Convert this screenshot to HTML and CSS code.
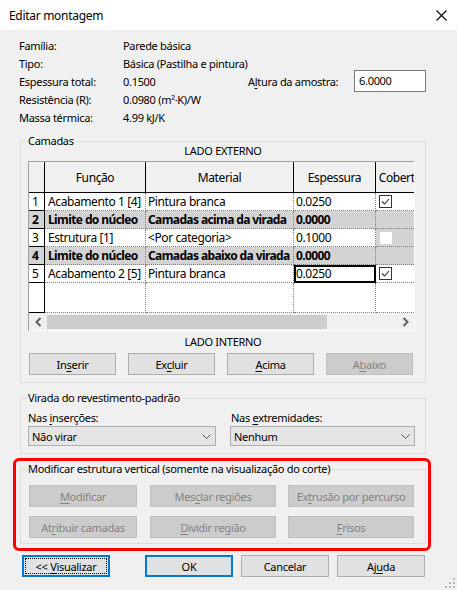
FILE: index.html
```html
<!DOCTYPE html>
<html lang="pt-BR">
<head>
<meta charset="utf-8">
<title>Editar montagem</title>
<link rel="stylesheet" href="styles.css">
</head>
<body>
<div class="titlebar">
    <span class="title">Editar montagem</span>
    <svg class="close" width="11" height="11" viewBox="0 0 11 11"><path d="M0.5 0.5 L10.5 10.5 M10.5 0.5 L0.5 10.5" stroke="#000" stroke-width="1.1" fill="none"/></svg>
</div>

<div class="content">
    <!-- dados da parede -->
    <div class="info">
        <span>Família:</span><span class="wide">Parede básica</span>
        <span>Tipo:</span><span class="wide">Básica (Pastilha e pintura)</span>
        <span>Espessura total:</span><span>0.1500</span><span>A<u>l</u>tura da amostra:</span><span class="textbox">6.0000</span>
        <span>Resistência (R):</span><span class="wide">0.0980 (m²·K)/W</span>
        <span>Massa térmica:</span><span class="wide">4.99 kJ/K</span>
    </div>

    <fieldset class="group layers">
        <legend>Camadas</legend>
        <div class="side top">LADO EXTERNO</div>
        <div class="grid-frame">
            <div class="grid-clip">
                <table class="layers-table">
                    <colgroup><col class="c-num"><col class="c-func"><col class="c-mat"><col class="c-esp"><col class="c-cob"></colgroup>
                    <thead>
                        <tr><th class="num"></th><th>Função</th><th>Material</th><th>Espessura</th><th>Cobertura</th></tr>
                    </thead>
                    <tbody>
                        <tr><td class="num">1</td><td class="func">Acabamento 1 [4]</td><td>Pintura branca</td><td>0.0250</td><td class="chk"><span class="checkbox on"></span></td></tr>
                        <tr class="core"><td class="num">2</td><td class="func">Limite do núcleo</td><td>Camadas acima da virada</td><td>0.0000</td><td></td></tr>
                        <tr><td class="num">3</td><td class="func">Estrutura [1]</td><td>&lt;Por categoria&gt;</td><td>0.1000</td><td class="chk off"><span class="checkbox blank"></span></td></tr>
                        <tr class="core"><td class="num">4</td><td class="func">Limite do núcleo</td><td>Camadas abaixo da virada</td><td>0.0000</td><td></td></tr>
                        <tr><td class="num">5</td><td class="func">Acabamento 2 [5]</td><td>Pintura branca</td><td class="editing">0.0250</td><td class="chk"><span class="checkbox on"></span></td></tr>
                        <tr class="empty"><td class="num"></td><td></td><td></td><td></td><td></td></tr>
                    </tbody>
                </table>
            </div>
            <div class="hscroll">
                <span class="arrow"><svg width="7" height="10" viewBox="0 0 7 10"><polyline points="5.5,1 1.5,5 5.5,9" fill="none" stroke="#606060" stroke-width="2"/></svg></span>
                <span class="thumb"></span>
                <span class="track"></span>
                <span class="arrow"><svg width="7" height="10" viewBox="0 0 7 10"><polyline points="1.5,1 5.5,5 1.5,9" fill="none" stroke="#606060" stroke-width="2"/></svg></span>
            </div>
        </div>
        <div class="side bottom">LADO INTERNO</div>
        <div class="layer-buttons">
            <button class="btn">In<u>s</u>erir</button>
            <button class="btn">Ex<u>c</u>luir</button>
            <button class="btn"><u>A</u>cima</button>
            <button class="btn" disabled>A<u>b</u>aixo</button>
        </div>
    </fieldset>

    <fieldset class="group wrap">
        <legend>Virada do revestimento-padrão</legend>
        <div class="wrap-grid">
            <label>Nas <u>i</u>nserções:</label>
            <label class="second">Nas <u>e</u>xtremidades:</label>
            <div class="select"><span>Não virar</span><svg width="9" height="5" viewBox="0 0 9 5"><polyline points="0.5,0.5 4.5,4.5 8.5,0.5" fill="none" stroke="#555" stroke-width="1"/></svg></div>
            <div class="select"><span>Nenhum</span><svg width="9" height="5" viewBox="0 0 9 5"><polyline points="0.5,0.5 4.5,4.5 8.5,0.5" fill="none" stroke="#555" stroke-width="1"/></svg></div>
        </div>
    </fieldset>

    <div class="highlight">
        <fieldset class="group modify">
            <legend>Modificar estrutura vertical (somente na visualização do corte)</legend>
            <div class="modify-grid">
                <button class="btn" disabled><u>M</u>odificar</button>
                <button class="btn" disabled>Mes<u>c</u>lar regiões</button>
                <button class="btn" disabled>Ex<u>t</u>rusão por percurso</button>
                <button class="btn" disabled>At<u>r</u>ibuir camadas</button>
                <button class="btn" disabled><u>D</u>ividir região</button>
                <button class="btn" disabled><u>F</u>risos</button>
            </div>
        </fieldset>
    </div>

    <div class="footer">
        <button class="btn default focus">&lt;&lt; <u>V</u>isualizar</button>
        <button class="btn default ok">OK</button>
        <button class="btn">Cancelar</button>
        <button class="btn">Aj<u>u</u>da</button>
    </div>
</div>

<svg class="grip" width="10" height="10" viewBox="0 0 10 10">
    <rect x="8" y="0" width="2" height="2" fill="#b8b8b8"/>
    <rect x="4" y="4" width="2" height="2" fill="#b8b8b8"/>
    <rect x="8" y="4" width="2" height="2" fill="#b8b8b8"/>
    <rect x="0" y="8" width="2" height="2" fill="#b8b8b8"/>
    <rect x="4" y="8" width="2" height="2" fill="#b8b8b8"/>
    <rect x="8" y="8" width="2" height="2" fill="#b8b8b8"/>
</svg>
</body>
</html>
```

FILE: styles.css
```css
html, body {
    margin: 0;
}

body {
    position: relative;
    width: 457px;
    height: 590px;
    overflow: hidden;
    background: #f0f0f0;
    font-family: "Noto Sans", "Segoe UI", sans-serif;
    font-size: 11px;
    letter-spacing: -0.3px;
    color: #000;
}

u {
    text-decoration-thickness: 1px;
    text-underline-offset: 2px;
}

/* barra de título */
.titlebar {
    height: 30px;
    background: #fff;
    display: flex;
    align-items: center;
    justify-content: space-between;
    padding: 0 10px 0 9px;
    box-sizing: border-box;
}
.title {
    font-size: 12px;
}

.content {
    padding: 6px 31px 0 20px;
}

/* dados da parede */
.info {
    display: grid;
    grid-template-columns: 104px 125px 106px 72px;
    grid-auto-rows: 18px;
    align-items: center;
    margin-left: -1px;
}
.info .wide {
    grid-column: 2 / 5;
}
.textbox {
    height: 22px;
    box-sizing: border-box;
    border: 1px solid #7a7a7a;
    background: #fff;
    padding-left: 4px;
    line-height: 20px;
}

/* caixas de grupo */
.group {
    margin: 9px 0 0;
    border: 1px solid #dcdcdc;
    padding: 0 7px 7px;
    min-width: 0;
}
.group legend {
    padding: 0 2px 0 0;
    line-height: 12px;
}

.side {
    text-align: center;
    line-height: 12px;
}
.side.top {
    margin: -2px 0 4px;
}
.side.bottom {
    margin: 5px 0 5px;
}

/* tabela de camadas */
.grid-frame {
    width: 387px;
    box-sizing: border-box;
    border: 1px solid #a0a0a0;
    border-right-color: #fff;
    border-bottom-color: #fff;
}
.grid-clip {
    height: 151px;
    overflow: hidden;
    background: #fff;
}
.layers-table {
    table-layout: fixed;
    border-collapse: separate;
    border-spacing: 0;
    width: 407px;
    font-size: 12px;
    letter-spacing: -0.4px;
}
.c-num { width: 16px; }
.c-func { width: 101px; }
.c-mat { width: 148px; }
.c-esp { width: 82px; }
.c-cob { width: 60px; }

.layers-table thead tr {
    height: 31px;
}
.layers-table th {
    background: #f0f0f0;
    font-weight: normal;
    border-right: 1px solid #000;
    border-bottom: 1px solid #000;
    padding: 0;
    white-space: nowrap;
    overflow: hidden;
}
.layers-table tbody tr {
    height: 18px;
}
.layers-table tbody tr.empty {
    height: 30px;
}
.layers-table td {
    border-right: 1px dotted #808080;
    border-bottom: 1px dotted #808080;
    padding: 0 0 0 2px;
    white-space: nowrap;
    overflow: hidden;
    line-height: 16px;
}
.layers-table td.num {
    border-right: 1px solid #000;
    border-bottom: 1px solid #000;
    padding-left: 3px;
}
.layers-table td.func {
    padding-left: 3px;
}
.layers-table tr.core td {
    background: #d3d3d3;
    font-weight: bold;
    letter-spacing: -0.6px;
}
.layers-table td.off {
    background: #d3d3d3;
}
.layers-table td.editing {
    outline: 2px solid #000;
    outline-offset: -2px;
}
.layers-table td.chk {
    padding-left: 3px;
}

.checkbox {
    display: block;
    width: 13px;
    height: 13px;
    box-sizing: border-box;
}
.checkbox.on {
    border: 1px solid #333;
    background: #fff url("data:image/svg+xml,%3Csvg xmlns='http://www.w3.org/2000/svg' width='11' height='11'%3E%3Cpolyline points='2,5.5 4.5,8 9,3' fill='none' stroke='%23333' stroke-width='1.1'/%3E%3C/svg%3E") no-repeat center;
}
.checkbox.blank {
    background: #fff;
    width: 12px;
    height: 12px;
    margin-left: 1px;
}

.hscroll {
    display: flex;
    height: 17px;
    background: #f0f0f0;
}
.hscroll .arrow {
    width: 18px;
    display: flex;
    align-items: center;
    justify-content: center;
}
.hscroll .thumb {
    width: 280px;
    margin: 2px 0 1px;
    background: #cdcdcd;
}
.hscroll .track {
    flex: 1;
}

/* botões */
.btn {
    box-sizing: border-box;
    height: 22px;
    border: 1px solid #adadad;
    background: #e1e1e1;
    font: inherit;
    letter-spacing: inherit;
    color: #000;
    padding: 0;
    border-radius: 0;
}
.btn:disabled {
    background: #cccccc;
    border-color: #bfbfbf;
    color: #838383;
}

.layer-buttons {
    display: flex;
    gap: 12px;
    margin-left: 1px;
}
.layer-buttons .btn {
    width: 87px;
}

/* virada */
.wrap-grid {
    display: grid;
    grid-template-columns: 188px 185px;
    column-gap: 14px;
    padding-top: 7px;
}
.wrap-grid label {
    line-height: 14px;
}
.wrap-grid label.second {
    padding-left: 1px;
}
.select {
    height: 20px;
    margin-top: 1px;
    box-sizing: border-box;
    border: 1px solid #adadad;
    background: #e5e5e5;
    display: flex;
    align-items: center;
    justify-content: space-between;
    padding: 0 4px 0 3px;
}

/* contorno vermelho */
.highlight {
    margin: 4px -5px 0 -7px;
    border: 3px solid #ff0000;
    border-radius: 6px;
    padding: 2px 2px 4px 4px;
}
.highlight .group {
    margin-top: 0;
    padding-bottom: 5px;
}
.modify-grid {
    display: grid;
    grid-template-columns: 109px 126px 126px;
    column-gap: 12px;
    row-gap: 9px;
    padding: 10px 0 0 1px;
}
.modify-grid .btn {
    width: 100%;
}
.modify-grid .btn:nth-child(3n+1) {
    width: 108px;
}

/* rodapé */
.footer {
    display: flex;
    gap: 8px;
    margin: 4px 0 0 2px;
}
.footer .btn {
    width: 88px;
}
.footer .focus {
    margin-right: 27px;
}
.btn.default {
    border: 1px solid #0078d7;
    box-shadow: inset 0 0 0 1px #0078d7;
}
.btn.focus {
    outline: 1px dotted #000;
    outline-offset: -4px;
}

.grip {
    position: absolute;
    right: 2px;
    bottom: 2px;
}
```
